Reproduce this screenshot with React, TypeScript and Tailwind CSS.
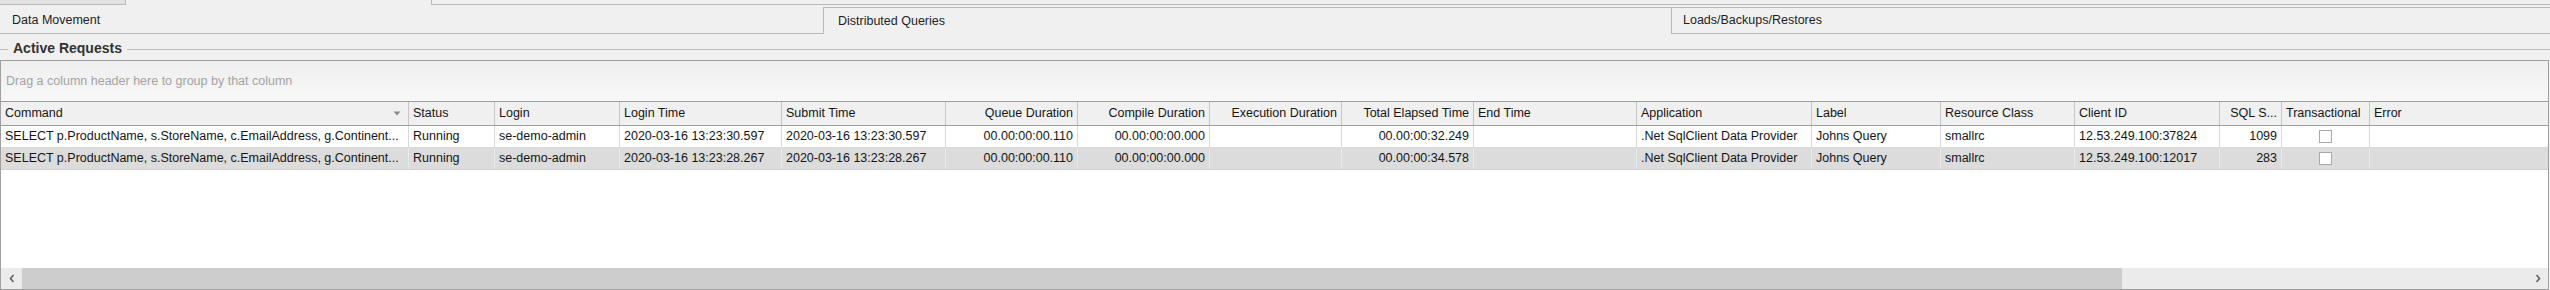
import type { ReactNode } from "react";

type Col = { title: string; w: string; right?: boolean; arrow?: boolean };

// 列幅はスクリーンショットの区切り線位置から逆算
const columns: Col[] = [
  { title: "Command", w: "w-[408px]", arrow: true },
  { title: "Status", w: "w-[86px]" },
  { title: "Login", w: "w-[125px]" },
  { title: "Login Time", w: "w-[162px]" },
  { title: "Submit Time", w: "w-[164px]" },
  { title: "Queue Duration", w: "w-[132px]", right: true },
  { title: "Compile Duration", w: "w-[132px]", right: true },
  { title: "Execution Duration", w: "w-[132px]", right: true },
  { title: "Total Elapsed Time", w: "w-[132px]", right: true },
  { title: "End Time", w: "w-[163px]" },
  { title: "Application", w: "w-[175px]" },
  { title: "Label", w: "w-[129px]" },
  { title: "Resource Class", w: "w-[134px]" },
  { title: "Client ID", w: "w-[145px]" },
  { title: "SQL S...", w: "w-[62px]", right: true },
  { title: "Transactional", w: "w-[88px]" },
  { title: "Error", w: "flex-1" },
];

const command = "SELECT p.ProductName, s.StoreName, c.EmailAddress, g.Continent...";

const rows: string[][] = [
  [
    command,
    "Running",
    "se-demo-admin",
    "2020-03-16 13:23:30.597",
    "2020-03-16 13:23:30.597",
    "00.00:00:00.110",
    "00.00:00:00.000",
    "",
    "00.00:00:32.249",
    "",
    ".Net SqlClient Data Provider",
    "Johns Query",
    "smallrc",
    "12.53.249.100:37824",
    "1099",
    "[checkbox]",
    "",
  ],
  [
    command,
    "Running",
    "se-demo-admin",
    "2020-03-16 13:23:28.267",
    "2020-03-16 13:23:28.267",
    "00.00:00:00.110",
    "00.00:00:00.000",
    "",
    "00.00:00:34.578",
    "",
    ".Net SqlClient Data Provider",
    "Johns Query",
    "smallrc",
    "12.53.249.100:12017",
    "283",
    "[checkbox]",
    "",
  ],
];

function Checkbox() {
  return <div className="mx-auto h-[13px] w-[13px] border border-[#a9a9a9] bg-white" />;
}

function Cell({
  col,
  last,
  borderColor,
  children,
}: {
  col: Col;
  last: boolean;
  borderColor: string;
  children: ReactNode;
}) {
  return (
    <div
      className={`${col.w} flex h-full shrink-0 items-center overflow-hidden whitespace-nowrap px-[4px] ${
        col.right ? "justify-end" : "justify-start"
      } ${last ? "" : `border-r ${borderColor}`}`}
    >
      {children}
    </div>
  );
}

function TabStrip() {
  return (
    <div className="text-[#1e1e1e]">
      <div className="flex h-[5px]">
        <div className="w-[126px] border-r border-b border-[#b9b9b9] bg-[#e2e2e2]" />
        <div className="w-[305px]" />
        <div className="flex-1 border-b border-l border-[#b9b9b9]" />
      </div>
      <div className="flex h-[29px]">
        <div className="flex w-[823px] items-center border-b border-[#b9b9b9] pl-[12px] pt-[2px]">
          Data Movement
        </div>
        <div className="mt-[2px] flex w-[849px] items-center border-x border-t border-[#b9b9b9] pl-[14px]">
          Distributed Queries
        </div>
        <div className="mt-[2px] flex flex-1 items-center border-t border-b border-[#b9b9b9] pl-[11px]">
          Loads/Backups/Restores
        </div>
      </div>
    </div>
  );
}

function ScrollBar() {
  return (
    <div className="flex h-[21px] bg-[#ebebeb]">
      <div className="flex w-[21px] items-center justify-center">
        <svg width="6" height="9" viewBox="0 0 6 9">
          <path d="M4.5 1 L1.5 4.5 L4.5 8" fill="none" stroke="#606060" strokeWidth="1.6" />
        </svg>
      </div>
      <div className="w-[2100px] bg-[#cdcdcd]" />
      <div className="flex-1" />
      <div className="flex w-[21px] items-center justify-center">
        <svg width="6" height="9" viewBox="0 0 6 9">
          <path d="M1.5 1 L4.5 4.5 L1.5 8" fill="none" stroke="#606060" strokeWidth="1.6" />
        </svg>
      </div>
    </div>
  );
}

export default function App() {
  return (
    <div className="h-[290px] w-[2550px] overflow-hidden bg-[#f0f0f0] font-['Liberation_Sans',Arial,sans-serif] text-[12.5px] leading-none text-[#151515]">
      <TabStrip />

      <div className="flex h-[26px] items-center pt-[2px]">
        <div className="mt-[3px] h-px w-[8px] bg-[#bcbcbc]" />
        <div className="px-[5px] text-[14px] font-bold text-[#333333]">Active Requests</div>
        <div className="mt-[3px] h-px flex-1 bg-[#bcbcbc]" />
      </div>

      <div className="flex h-[230px] w-[2549px] flex-col border border-[#a0a0a0] bg-white">
        <div className="flex h-[40px] items-center bg-gradient-to-b from-[#eeeeee] to-[#f8f8f8] pl-[5px] pt-[1px] text-[#a3a3a3]">
          Drag a column header here to group by that column
        </div>

        <div className="flex h-[25px] border-y border-[#a0a0a0] bg-[#f0f0f0]">
          {columns.map((col, i) => (
            <Cell key={col.title} col={col} last={i === columns.length - 1} borderColor="border-[#c6c6c6]">
              {col.arrow ? (
                <div className="flex w-full items-center justify-between">
                  <span>{col.title}</span>
                  <svg width="8" height="5" viewBox="0 0 8 5" className="mr-[3px]">
                    <path d="M0.5 0.5 L7.5 0.5 L4 4.5 Z" fill="#8a8a8a" />
                  </svg>
                </div>
              ) : (
                col.title
              )}
            </Cell>
          ))}
        </div>

        {rows.map((row, r) => (
          <div
            key={r}
            className={`flex h-[22px] border-b ${
              r === 1 ? "border-[#d2d2d2] bg-[#dcdcdc]" : "border-[#dadada] bg-white"
            }`}
          >
            {row.map((value, i) => (
              <Cell
                key={i}
                col={columns[i]}
                last={i === row.length - 1}
                borderColor={r === 1 ? "border-[#e9e9e9]" : "border-[#dadada]"}
              >
                {value === "[checkbox]" ? <Checkbox /> : value}
              </Cell>
            ))}
          </div>
        ))}

        <div className="flex-1" />
        <ScrollBar />
      </div>
    </div>
  );
}
